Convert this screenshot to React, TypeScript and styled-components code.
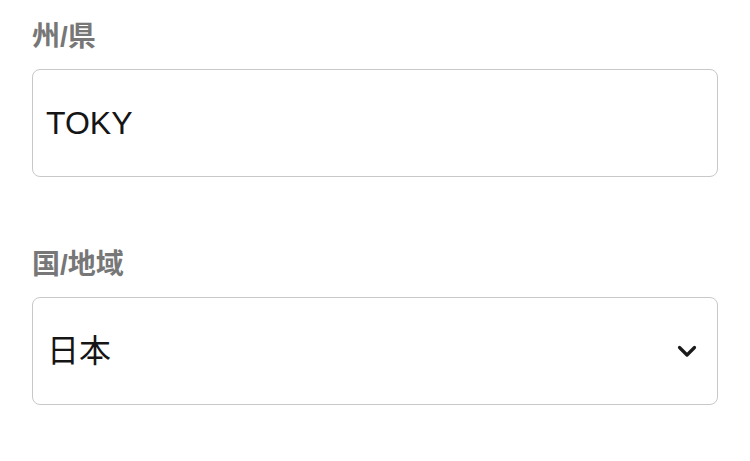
import React from "react";
import styled, { createGlobalStyle } from "styled-components";

const Global = createGlobalStyle`
  html, body { margin: 0; padding: 0; background: #fff; }
  body { font-family: "Liberation Sans", "Noto Sans CJK JP", sans-serif; }
`;

const Form = styled.div`
  width: 686px;
  padding: 18px 0 0 32px;
  display: flex;
  flex-direction: column;
  gap: 69px;
`;

const Field = styled.div`
  display: flex;
  flex-direction: column;
  gap: 13px;
`;

const Label = styled.label`
  font-family: "Liberation Sans", "Noto Sans CJK JP", sans-serif;
  font-size: 28px;
  line-height: 38px;
  font-weight: 700;
  color: #777;
`;

const Box = styled.div<{ $pad: number }>`
  box-sizing: border-box;
  height: 108px;
  border: 1px solid #c8c8c8;
  border-radius: 8px;
  display: flex;
  align-items: center;
  padding: 0 20px 0 ${(p) => p.$pad}px;
  font-family: "Liberation Sans", "Noto Sans CJK JP", sans-serif;
  font-size: 32px;
  color: #151515;
`;

const Value = styled.span`
  flex: 1;
  line-height: 1;
`;

const Chevron = styled.svg`
  width: 20px;
  height: 20px;
  flex: none;
`;

export default function App() {
  return (
    <>
      <Global />
      <Form>
        <Field>
          <Label>州/県</Label>
          <Box $pad={13}>
            <Value>TOKY</Value>
          </Box>
        </Field>
        <Field>
          <Label>国/地域</Label>
          <Box $pad={14}>
            <Value>日本</Value>
            <Chevron viewBox="0 0 20 20">
              <path d="M2.5 6.5 L10 14 L17.5 6.5" fill="none" stroke="#1a1a1a" strokeWidth="3.2" strokeLinecap="round" strokeLinejoin="round" />
            </Chevron>
          </Box>
        </Field>
      </Form>
    </>
  );
}
